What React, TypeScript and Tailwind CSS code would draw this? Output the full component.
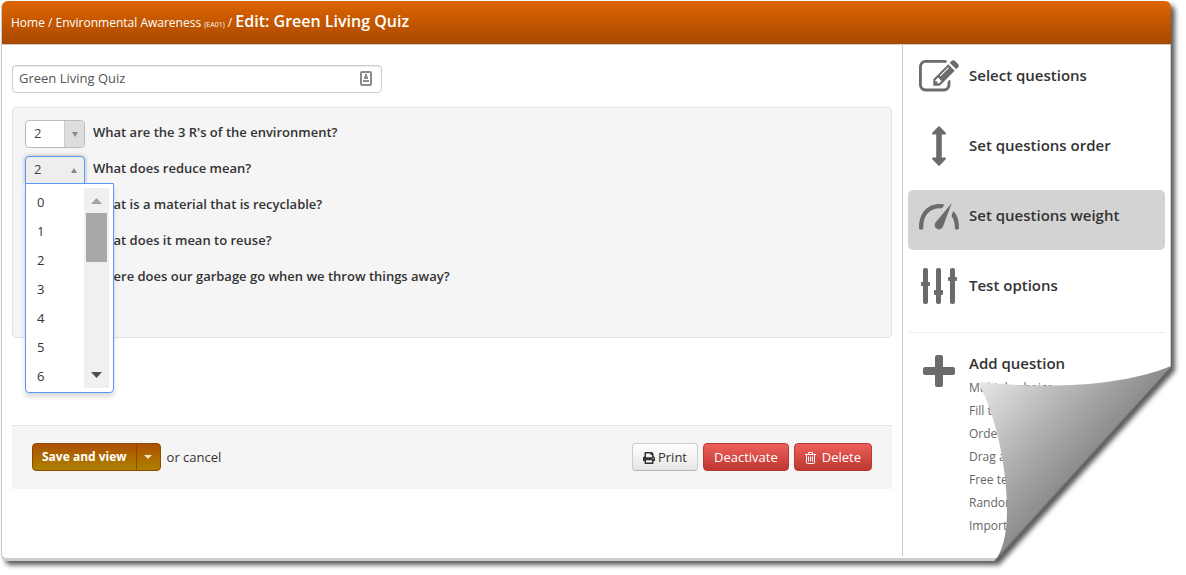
import type { ReactNode } from "react";
import { FaPrint } from "react-icons/fa";

const QUESTIONS = [
  "What are the 3 R's of the environment?",
  "What does reduce mean?",
  "What is a material that is recyclable?",
  "What does it mean to reuse?",
  "Where does our garbage go when we throw things away?",
];

const WEIGHTS = ["0", "1", "2", "3", "4", "5", "6"];

const QUESTION_TYPES = [
  "Multiple choice",
  "Fill the gap",
  "Ordering",
  "Drag and drop",
  "Free text",
  "Randomized",
  "Import questions",
];

function EditIcon() {
  return (
    <svg width="40" height="32" viewBox="0 128 1792 1434" fill="#6b6b6b" aria-hidden="true">
      <path d="M888 1184l116-116-152-152-116 116v56h96v96h56zm440-720q-16-16-33 1l-350 350q-17 17-1 33t33-1l350-350q17-17 1-33zm80 594v190q0 119-84.500 203.500t-203.500 84.500h-832q-119 0-203.500-84.500t-84.500-203.500v-832q0-119 84.500-203.500t203.500-84.500h832q63 0 117 25 15 7 18 23 3 17-9 29l-49 49q-14 14-32 8-23-6-45-6h-832q-66 0-113 47t-47 113v832q0 66 47 113t113 47h832q66 0 113-47t47-113v-126q0-13 9-22l64-64q15-15 35-7t20 29zm-96-738l288 288-672 672h-288v-288zm444 132l-92 92-288-288 92-92q28-28 68-28t68 28l152 152q28 28 28 68t-28 68z" />
    </svg>
  );
}

function OrderIcon() {
  return (
    <svg width="14" height="40" viewBox="0 0 14 40" fill="#6b6b6b" aria-hidden="true">
      <path d="M6.300.500a1 1 0 0 1 1.400 0l6 6.300c.7.800.2 1.700-.7 1.700h-3.200v23h3.200c.9 0 1.400.9.7 1.700l-6 6.300a1 1 0 0 1-1.400 0l-6-6.300c-.7-.8-.2-1.700.7-1.700h3.200v-23H1c-.9 0-1.400-.9-.7-1.700z" />
    </svg>
  );
}

function GaugeIcon() {
  return (
    <svg width="40" height="27" viewBox="0 0 40 27" fill="#6b6b6b" aria-hidden="true">
      <path d="M0 25C0 9 9 1 21 1c1.500 0 3 .2 4.500.6L23 5.200C11 4.500 4 12 4.300 25c0 2.300-4.300 2.300-4.300 0z" />
      <path d="M34.200 8C38 11.500 40 17 40 25c0 2.300-4.200 2.300-4.200 0 0-5-.8-8.500-3.300-12z" />
      <path d="M32.800 0L24 23.500a4.300 4.300 0 1 1-7.500-4z" />
    </svg>
  );
}

function SlidersIcon() {
  return (
    <svg width="36" height="36" viewBox="0 0 36 36" fill="#6b6b6b" aria-hidden="true">
      <rect x="2" width="5" height="36" rx="2" />
      <rect y="14" width="9" height="4" rx="1" />
      <rect x="15" width="5" height="36" rx="2" />
      <rect x="13" y="22" width="9" height="5" rx="1" />
      <rect x="29" width="5" height="36" rx="2" />
      <rect x="27" y="9" width="9" height="4" rx="1" />
    </svg>
  );
}

function PlusIcon() {
  return (
    <svg width="32" height="32" viewBox="0 0 32 32" fill="#6b6b6b" aria-hidden="true">
      <rect x="12" width="8" height="32" rx="2" />
      <rect y="12" width="32" height="8" rx="2" />
    </svg>
  );
}

function TrashIcon() {
  return (
    <svg width="11" height="12" viewBox="0 0 11 12" fill="none" stroke="#fff" aria-hidden="true">
      <path d="M0 2.500h11M3.500 2.500V.500h4v2M1.500 2.500v8.200c0 .5.300.800.800.800h6.400c.5 0 .8-.3.800-.8V2.500M3.500 4.500v5M5.500 4.500v5M7.500 4.500v5" />
    </svg>
  );
}

function PageCurl() {
  return (
    <svg
      className="absolute right-0 bottom-0 pointer-events-none"
      width="208"
      height="215"
      viewBox="978 360 208 215"
      aria-hidden="true"
    >
      <defs>
        <linearGradient id="fold" gradientUnits="userSpaceOnUse" x1="978" y1="381" x2="1086" y2="479">
          <stop offset="0" stopColor="#e8e8e8" />
          <stop offset="0.500" stopColor="#b4b4b4" />
          <stop offset="1" stopColor="#848484" />
        </linearGradient>
        <filter id="soft" filterUnits="userSpaceOnUse" x="900" y="300" width="300" height="300">
          <feGaussianBlur stdDeviation="2.500" />
        </filter>
        <clipPath id="outside">
          <path d="M1171 360V366L995 560H978V575H1186V360z" />
        </clipPath>
      </defs>
      <g clipPath="url(#outside)">
        <rect x="978" y="360" width="208" height="215" fill="#fff" />
        <path
          d="M1175 320V370L999 564H940V320z"
          fill="#000"
          fillOpacity="0.650"
          filter="url(#soft)"
        />
      </g>
      <path
        d="M978 381C1045 388 1120 386 1171 365L995 560C1002 550 1007 535 1007 510C1007 465 996 415 978 381z"
        fill="url(#fold)"
      />
      <path d="M1171 366L995 560" stroke="#6e6e6e" strokeWidth="1.500" />
    </svg>
  );
}

interface MenuItemProps {
  icon: ReactNode;
  label: string;
  active?: boolean;
}

function MenuItem({ icon, label, active }: MenuItemProps) {
  return (
    <a
      href="#"
      className={`flex h-15 items-start rounded-[5px] pl-[11px] ${active ? "bg-[#d3d3d3]" : ""}`}
    >
      <span className="flex h-13 w-10 shrink-0 items-center justify-center">{icon}</span>
      <span className="ml-2.5 leading-[50px]">{label}</span>
    </a>
  );
}

function WeightSelect({ label, open }: { label: string; open?: boolean }) {
  return (
    <div className="relative h-7 w-15 shrink-0">
      <select
        aria-label={label}
        defaultValue="2"
        className={`h-full w-full appearance-none border pl-2 text-[13px] text-[#444] outline-none ${
          open
            ? "rounded-t border-[#5897fb] bg-[#eee] shadow-[0_0_4px_rgba(0,0,0,0.3)]"
            : "rounded border-[#bbb] bg-white"
        }`}
      >
        {WEIGHTS.map((w) => (
          <option key={w}>{w}</option>
        ))}
      </select>
      <span
        className={`pointer-events-none absolute inset-y-px right-px flex w-5 items-center justify-center ${
          open ? "" : "rounded-r-[3px] border-l border-[#ccc] bg-[#ddd]"
        }`}
      >
        <svg width="6" height="5" viewBox="0 0 6 5" fill="#888" aria-hidden="true">
          <path d={open ? "M0 5h6L3 0z" : "M0 0h6L3 5z"} />
        </svg>
      </span>
      {open && <WeightList />}
    </div>
  );
}

function WeightList() {
  return (
    <div className="absolute top-[27px] left-0 z-10 flex w-[89px] rounded-b border border-[#5897fb] bg-white py-1 pr-1 shadow-[0_4px_5px_rgba(0,0,0,0.15)]">
      <ul role="listbox" aria-label="Weight" className="h-[200px] flex-1 overflow-hidden">
        {WEIGHTS.map((w) => (
          <li key={w} role="option" aria-selected={w === "2"} className="h-[29px] pl-[11px] text-[13px] leading-[29px]">
            {w}
          </li>
        ))}
      </ul>
      <div className="flex w-[25px] flex-col items-center bg-[#f0f0f0]">
        <svg width="11" height="25" viewBox="0 0 11 25" aria-hidden="true">
          <path d="M0 16h11L5.500 10z" fill="#a3a3a3" />
        </svg>
        <div className="h-[49px] w-[21px] bg-[#a8a8a8]" />
        <svg className="mt-auto" width="11" height="25" viewBox="0 0 11 25" aria-hidden="true">
          <path d="M0 9h11L5.500 15z" fill="#505050" />
        </svg>
      </div>
    </div>
  );
}

export default function App() {
  return (
    <div className="relative overflow-hidden bg-white pt-px pr-[15px] pb-[15px] pl-px font-['Open_Sans','Noto_Sans',sans-serif] text-[13px] text-[#333]">
      <div className="rounded-md border-b-3 border-l border-[#ccc] bg-white shadow-[4px_4px_5px_rgba(0,0,0,0.65)]">
        <header className="flex h-[43px] items-center rounded-t-md bg-linear-to-b from-[#dd6400] to-[#a94900] pb-1 pl-[9px] text-white">
          <nav aria-label="Breadcrumb" className="text-xs">
            <a href="#">Home</a> / <a href="#">Environmental Awareness <span className="text-[7px]">(EA01)</span></a> /{" "}
            <h1 className="inline text-base font-semibold">Edit: Green Living Quiz</h1>
          </nav>
        </header>

        <div className="flex border-t border-r border-[#ccc] pb-0.5">
          <main className="min-w-0 flex-1 pt-5 pr-2.5 pl-2.5">
            <div className="relative w-[370px]">
              <input
                aria-label="Test name"
                defaultValue="Green Living Quiz"
                className="h-7 w-full rounded border border-[#ccc] px-1.5 pb-0.5 text-[13px] text-[#555] shadow-[inset_0_1px_1px_rgba(0,0,0,0.075)]"
              />
              <svg className="absolute top-1.5 right-2.5" width="12" height="15" viewBox="0 0 12 15" aria-hidden="true">
                <rect x="1" y="1" width="10" height="13" rx="1" fill="#fff" stroke="#8b8b8b" strokeWidth="2" />
                <path d="M5 3h2v2l1 1v2H4V6l1-1zM3 9h6v2H3z" fill="#8b8b8b" />
              </svg>
            </div>

            <section className="mt-3.5 flex min-h-[231px] flex-col gap-2 rounded border border-[#e3e3e3] bg-[#f5f5f5] p-3">
              {QUESTIONS.map((q, i) => (
                <div key={q} className="flex h-7 gap-2">
                  <WeightSelect label={q} open={i === 1} />
                  <span className="font-semibold leading-6">{q}</span>
                </div>
              ))}
            </section>

            <div className="mt-[87px] flex items-center border-t border-[#e5e5e5] bg-[#f5f5f5] pt-[17px] pr-5 pb-[18px] pl-5">
              <div className="flex h-7 rounded border border-[#8f4a00] bg-linear-to-b from-[#ad4f00] to-[#ab8100] text-white">
                <button type="button" className="px-[9px] text-xs font-bold leading-6">
                  Save and view
                </button>
                <button
                  type="button"
                  aria-label="More save options"
                  className="flex w-6 items-center justify-center border-l border-[#8f4a00]"
                >
                  <svg width="8" height="4" viewBox="0 0 8 4" fill="#f4e3cf" aria-hidden="true">
                    <path d="M0 0h8L4 4z" />
                  </svg>
                </button>
              </div>
              <span className="ml-1.5 leading-7">
                or <a href="#">cancel</a>
              </span>
              <div className="ml-auto flex gap-[5px]">
                <button
                  type="button"
                  className="flex h-7 items-center gap-[3px] rounded border border-[#ccc] border-b-[#b3b3b3] bg-linear-to-b from-white to-[#e6e6e6] px-2.5 pt-0.5"
                >
                  <FaPrint size={12} />
                  Print
                </button>
                <button
                  type="button"
                  className="flex h-7 items-center rounded border border-[#b73a35] bg-linear-to-b from-[#ee5f5b] to-[#bd362f] px-2.5 pt-0.5 text-white"
                >
                  Deactivate
                </button>
                <button
                  type="button"
                  className="flex h-7 items-center gap-1.5 rounded border border-[#b73a35] bg-linear-to-b from-[#ee5f5b] to-[#bd362f] px-2.5 pt-0.5 text-white"
                >
                  <TrashIcon />
                  Delete
                </button>
              </div>
            </div>
          </main>

          <aside className="w-[268px] shrink-0 border-l border-[#ccc] px-[5px] pt-[5px] pb-[19px]">
            <nav aria-label="Test settings" className="flex flex-col gap-2.5 border-b border-[#eee] pb-3 text-[15px] font-semibold">
              <MenuItem icon={<EditIcon />} label="Select questions" />
              <MenuItem icon={<OrderIcon />} label="Set questions order" />
              <MenuItem icon={<GaugeIcon />} label="Set questions weight" active />
              <MenuItem icon={<SlidersIcon />} label="Test options" />
            </nav>
            <div className="flex pt-5 pl-[11px]">
              <span className="flex h-9 w-10 shrink-0 items-center justify-center">
                <PlusIcon />
              </span>
              <div className="ml-2.5">
                <h2 className="pb-[3px] text-[15px] font-semibold leading-5">Add question</h2>
                <ul className="text-xs leading-[23px] text-[#666]">
                  {QUESTION_TYPES.map((t) => (
                    <li key={t}>
                      <a href="#">{t}</a>
                    </li>
                  ))}
                </ul>
              </div>
            </div>
          </aside>
        </div>
      </div>
      <PageCurl />
    </div>
  );
}
